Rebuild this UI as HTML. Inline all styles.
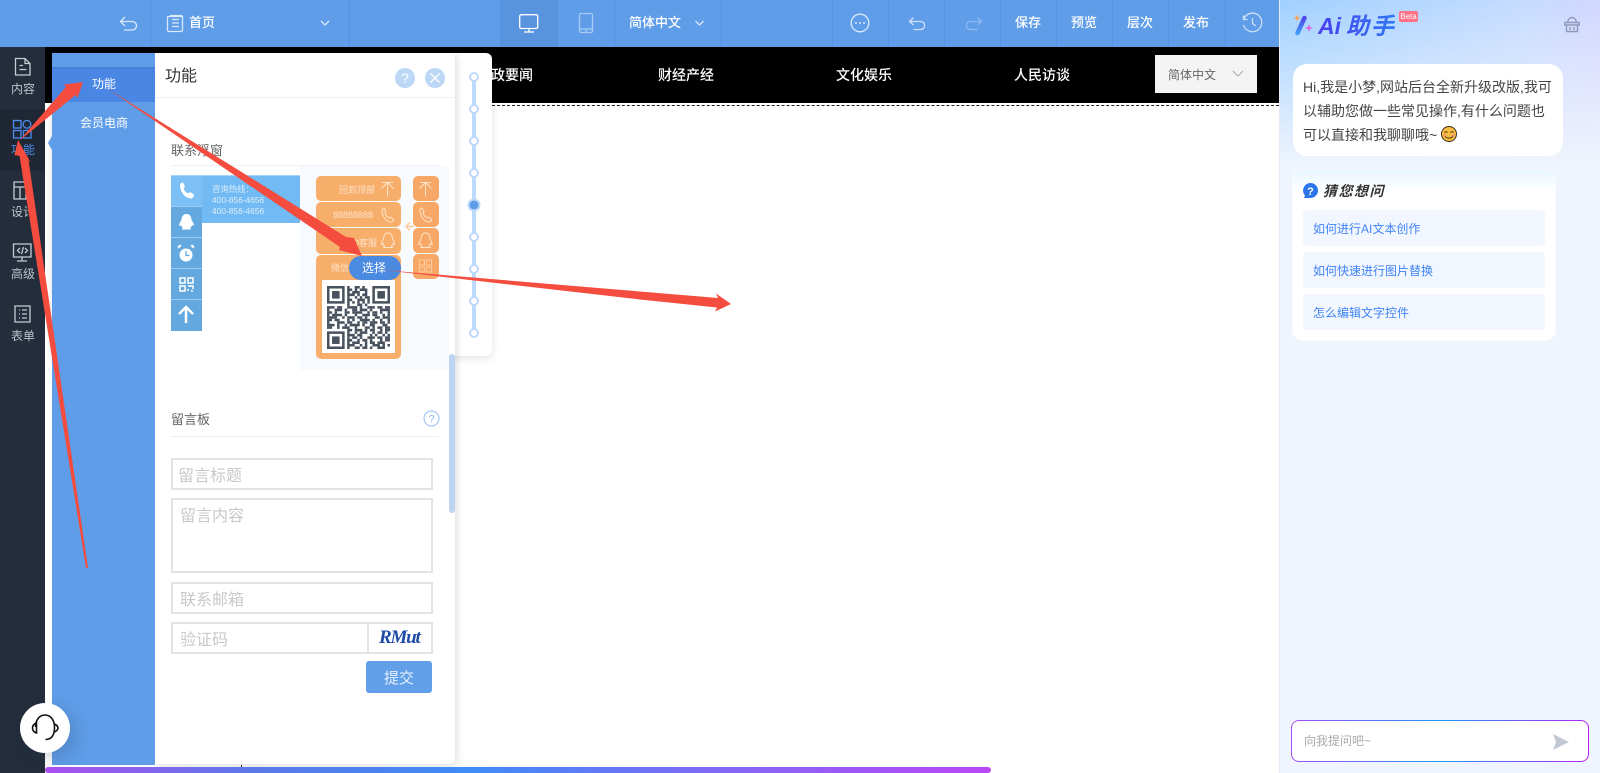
<!DOCTYPE html>
<html lang="zh-CN">
<head>
<meta charset="utf-8">
<title>编辑器</title>
<style>
html,body{margin:0;padding:0;width:1600px;height:773px;overflow:hidden;background:#fff}
body{position:relative;font-family:"Liberation Sans","Noto Sans CJK SC",sans-serif;color:#333}
.a{position:absolute}
.t{position:absolute;white-space:nowrap;line-height:20px}
.c{text-align:center;transform:translateX(-50%)}
.w{color:#fff}
.b{font-weight:500}
.div{position:absolute;top:0;width:1px;height:47px;background:#5592e3}
.inp{position:absolute;box-sizing:border-box;border:2px solid #e3e3e3;background:#fff}
.ph{position:absolute;white-space:nowrap;color:#c9c9c9;font-size:16px;line-height:20px}
.o{position:absolute;background:#f7ae6b;border-radius:5px}
.ot{position:absolute;white-space:nowrap;color:#fde3c9;font-size:9px;line-height:12px}
.bl{position:absolute;left:171px;width:31px;background:#63a9e0;border-top:1px solid #9ccaf0;box-sizing:border-box}
.q{position:absolute;left:1303px;width:242px;height:36px;background:#f2f6fe;border-radius:4px;color:#3f84f5;font-size:12px;line-height:38px;text-indent:10px}
svg{position:absolute;overflow:visible}
</style>
</head>
<body>

<!-- top bar -->
<div class="a" style="left:0;top:0;width:1279px;height:47px;background:#5f9de8"></div>
<div class="div" style="left:150px"></div>
<div class="div" style="left:349px"></div>
<div class="a" style="left:500px;top:0;width:57px;height:47px;background:#5893dd"></div>
<div class="div" style="left:500px"></div>
<div class="div" style="left:557px"></div>
<div class="div" style="left:614px"></div>
<div class="div" style="left:721px"></div>
<div class="div" style="left:832px"></div>
<div class="div" style="left:888px"></div>
<div class="div" style="left:944px"></div>
<div class="div" style="left:1000px"></div>
<div class="div" style="left:1056px"></div>
<div class="div" style="left:1112px"></div>
<div class="div" style="left:1168px"></div>
<div class="div" style="left:1225px"></div>

<svg style="left:0;top:0" width="1279" height="47" fill="none" stroke="#dbe9fb" stroke-width="1.3">
  <!-- back -->
  <path d="M125 17l-4.500 4.500 4.500 4.500M121 21.500h11c6 0 6 8.500 0 8.500h-8"/>
  <!-- page -->
  <path d="M167.500 16.500v13.500c0 .8.700 1.500 1.500 1.500h12c.8 0 1.500-.7 1.500-1.500V16M167.500 16.500h15M170 15.500h12.500"/>
  <path d="M172 19.500h7M172 23h7M172 26.500h7"/>
  <!-- chevron -->
  <path d="M321 21l4 4 4-4"/>
  <!-- desktop -->
  <rect x="519.700" y="14.700" width="18" height="13.800" rx="1.500" stroke="#fff"/>
  <path d="M529 28.500v3.500M524 32h10" stroke="#fff"/>
  <!-- mobile -->
  <rect x="579.500" y="13.500" width="13" height="19" rx="1.500" stroke="#a9cbf3"/>
  <path d="M579.500 29h13M585 31h2" stroke="#a9cbf3"/>
  <path d="M695.500 21l4 4 4-4"/>
  <!-- more -->
  <circle cx="860" cy="23" r="8.800" stroke="#dbe9fb"/>
  <circle cx="856" cy="23" r="1" fill="#dbe9fb" stroke="none"/>
  <circle cx="860" cy="23" r="1" fill="#dbe9fb" stroke="none"/>
  <circle cx="864" cy="23" r="1" fill="#dbe9fb" stroke="none"/>
  <!-- undo -->
  <path d="M913.500 17.500l-4 4 4 3.500M909.500 21.500h11c5.500 0 5.500 8 0 8h-7" stroke="#cfe1f9"/>
  <!-- redo -->
  <path d="M977.500 17.500l4 4-4 3.500M981.500 21.500h-11c-5.500 0-5.500 8 0 8h7" stroke="#8cb9ef"/>
  <!-- history -->
  <path d="M1244 18.500a9.300 9.300 0 1 1-.5 6.500M1243.500 15.500v4h4M1252.500 18v5.500l3.500 2.500" stroke="#cfe1f9"/>
</svg>

<div class="t w b" style="left:189px;top:13px;font-size:13px">首页</div>
<div class="t w b" style="left:629px;top:13px;font-size:13px">简体中文</div>
<div class="t w b" style="left:1015px;top:13px;font-size:13px">保存</div>
<div class="t w b" style="left:1071px;top:13px;font-size:13px">预览</div>
<div class="t w b" style="left:1127px;top:13px;font-size:13px">层次</div>
<div class="t w b" style="left:1183px;top:13px;font-size:13px">发布</div>

<!-- black nav -->
<div class="a" style="left:45px;top:47px;width:1234px;height:56px;background:#000"></div>
<div class="a" style="left:492px;top:104.500px;width:787px;height:0;border-top:1px dashed #222"></div>
<div class="t w b" style="left:491px;top:65px;font-size:14px">政要闻</div>
<div class="t w b" style="left:658px;top:65px;font-size:14px">财经产经</div>
<div class="t w b" style="left:836px;top:65px;font-size:14px">文化娱乐</div>
<div class="t w b" style="left:1014px;top:65px;font-size:14px">人民访谈</div>
<div class="a" style="left:1155px;top:55px;width:102px;height:38px;background:#f4f4f4"></div>
<div class="t" style="left:1168px;top:65px;font-size:12px;color:#666">简体中文</div>
<svg style="left:0;top:0" width="1279" height="100" fill="none"><path d="M1233 71l5 5 5-5" stroke="#aaa"/></svg>

<!-- sidebar -->
<div class="a" style="left:0;top:47px;width:45px;height:726px;background:#232d3b"></div>
<div class="a" style="left:0;top:109px;width:45px;height:62px;background:#1e2733"></div>
<svg style="left:0;top:47px" width="52" height="300" fill="none" stroke="#c6cbd2" stroke-width="1.300">
  <path d="M15.500 11.500h9.500l5 5v11.500h-14.500zM25 11.500v5h5M19.500 18.500h3.500M19.500 22.500h7"/>
  <g stroke="#4d8ff0"><rect x="13.500" y="73.500" width="7.500" height="7.500"/><circle cx="27" cy="77.300" r="3.900"/><rect x="13.500" y="83.500" width="7.500" height="7.500"/><rect x="23.500" y="83.500" width="7.500" height="7.500"/></g>
  <path d="M14 135h16.500v17H14zM14 140h16.500M20 140v12M26 140v12"/>
  <path d="M13.500 197h17.500v13H13.500zM22 210v4M17 214h10M20 201l-2.500 2.500 2.500 2.500M25 201l2.500 2.500-2.500 2.500M23.500 200l-2 7"/>
  <path d="M15 259h15v16H15zM19 263h1M22 263h5M19 267h1M22 267h5M19 271h1M22 271h5"/>
</svg>
<div class="t c" style="left:23px;top:79px;font-size:12px;color:#bcc2ca">内容</div>
<div class="t c" style="left:23px;top:140px;font-size:12px;color:#4d8ff0">功能</div>
<div class="t c" style="left:23px;top:202px;font-size:12px;color:#bcc2ca">设计</div>
<div class="t c" style="left:23px;top:264px;font-size:12px;color:#bcc2ca">高级</div>
<div class="t c" style="left:23px;top:326px;font-size:12px;color:#bcc2ca">表单</div>

<!-- white panel with rail -->
<div class="a" style="left:52px;top:53px;width:440px;height:303px;background:#fff;border-radius:0 6px 6px 0;box-shadow:0 2px 8px rgba(0,0,0,.12)"></div>
<div class="a" style="left:155px;top:53px;width:300px;height:711px;background:#fff;border-radius:0 0 5px 0;box-shadow:2px 2px 8px rgba(0,0,0,.13)"></div>
<div class="a" style="left:52px;top:53px;width:103px;height:712px;background:#5f9de8"></div>
<svg style="left:0;top:0" width="60" height="200"><path d="M52.500 135L48 143l4.500 8z" fill="#5f9de8"/></svg>
<div class="a" style="left:52px;top:67px;width:103px;height:35px;background:#4a86e3;border-top:2px solid #4580dc;box-sizing:border-box"></div>
<div class="t c w" style="left:104px;top:74px;font-size:12px">功能</div>
<div class="t c w" style="left:104px;top:113px;font-size:12px">会员电商</div>

<div class="t" style="left:165px;top:67px;font-size:16px;color:#333">功能</div>
<div class="a" style="left:155px;top:97px;width:300px;height:1px;background:#eef0f3"></div>
<svg style="left:0;top:0" width="500" height="360" fill="none">
  <circle cx="405" cy="78" r="10" fill="#bdd7f7"/>
  <text x="405" y="83" font-size="14" fill="#fff" text-anchor="middle" font-family="Liberation Sans">?</text>
  <circle cx="435" cy="78" r="10" fill="#bdd7f7"/>
  <path d="M430.500 73.500l9 9M439.500 73.500l-9 9" stroke="#fff" stroke-width="1.300"/>
  <!-- rail -->
  <path d="M474 77v256" stroke="#bdd9fb" stroke-width="4"/>
  <g fill="#fff" stroke="#bdd9fb" stroke-width="2">
    <circle cx="474" cy="77" r="4"/><circle cx="474" cy="109" r="4"/><circle cx="474" cy="141" r="4"/><circle cx="474" cy="173" r="4"/>
    <circle cx="474" cy="237" r="4"/><circle cx="474" cy="269" r="4"/><circle cx="474" cy="301" r="4"/><circle cx="474" cy="333" r="4"/>
  </g>
  <circle cx="474" cy="205" r="5.500" fill="#5f9de8" stroke="#bdd9fb" stroke-width="2"/>
</svg>

<div class="t" style="left:171px;top:141px;font-size:13px;color:#666">联系浮窗</div>
<div class="a" style="left:171px;top:165px;width:268px;height:1px;background:#eef0f3"></div>

<!-- preview -->
<div class="a" style="left:300px;top:166px;width:149px;height:204px;background:#f7faff"></div>
<div class="a" style="left:171px;top:175px;width:129px;height:48px;background:#72baf3;border-top:1px solid #a5d5f8;box-sizing:border-box"></div>
<div class="a" style="left:171px;top:176px;width:31px;height:31px;background:#7cc0f5"></div>
<div class="bl" style="top:206px;height:31px"></div>
<div class="bl" style="top:237px;height:31px"></div>
<div class="bl" style="top:268px;height:31px"></div>
<div class="bl" style="top:299px;height:32px"></div>
<div class="ot" style="left:212px;top:183px;color:#dbeefc;font-size:8.400px">咨询热线：</div>
<div class="ot" style="left:212px;top:194px;color:#dbeefc;font-size:8.400px">400-856-4656</div>
<div class="ot" style="left:212px;top:205px;color:#dbeefc;font-size:8.400px">400-856-4656</div>
<svg style="left:0;top:0" width="210" height="340" fill="#fff" stroke="none">
  <path d="M180 185c0-1.500 2-2.500 3-2.500l2 4-1.500 2c.8 2 2.500 4 4.500 5l2-1.500 4 2.500c0 2-1.500 4-3 4-6 0-11-7-11-13.500z"/>
  <path d="M186.500 214c3.500 0 5 3 5 6 1.500 2 3 4.500 2 6l-1.500-1c-.3 1.500-1 2.500-2 3l1.500 1.500h-10l1.500-1.500c-1-.5-1.700-1.500-2-3l-1.500 1c-1-1.500.5-4 2-6 0-3 1.500-6 5-6z"/>
  <circle cx="186" cy="255" r="6.500" fill="#fff"/>
  <path d="M178.500 248.500l3-2.500-1.500-1.500-2.500 2zM193.500 248.500l-3-2.500 1.500-1.500 2.500 2z"/>
  <path d="M186 251v4.500h3.500" fill="none" stroke="#63a9e0" stroke-width="1.300"/>
  <g fill="none" stroke="#fff" stroke-width="1.500">
    <rect x="180" y="278" width="5" height="5"/><rect x="188" y="278" width="5" height="5"/><rect x="180" y="286" width="5" height="5"/>
    <path d="M188 286h5v3M188 289v2M191 291h2"/>
  </g>
  <path d="M186 323v-16M179 314l7-7 7 7" fill="none" stroke="#fff" stroke-width="2.500"/>
</svg>

<div class="o" style="left:316px;top:176px;width:85px;height:25px"></div>
<div class="o" style="left:316px;top:202px;width:85px;height:25px"></div>
<div class="o" style="left:316px;top:228px;width:85px;height:26px"></div>
<div class="o" style="left:316px;top:255px;width:85px;height:104px"></div>
<div class="o" style="left:413px;top:176px;width:26px;height:25px;background:#f7a866"></div>
<div class="o" style="left:413px;top:202px;width:26px;height:25px;background:#f7a866"></div>
<div class="o" style="left:413px;top:228px;width:26px;height:25px;background:#f7a866"></div>
<div class="o" style="left:413px;top:254px;width:26px;height:25px;background:#f7a866"></div>
<div class="ot" style="left:339px;top:184px">回到顶部</div>
<div class="ot" style="left:333px;top:209px">88888888</div>
<div class="ot" style="left:345px;top:237px">QQ客服</div>
<div class="ot" style="left:331px;top:262px">微信</div>
<svg style="left:300px;top:170px" width="150" height="120" fill="none" stroke="#fde3c9" stroke-width="1">
  <path d="M82 12.500h11M87.500 12.500v14M81.500 18.500l6-6 6 6"/>
  <path d="M120 12.500h11M125.500 12.500v14M119.500 18.500l6-6 6 6"/>
  <path d="M82 40c0-1 1-2 2-2l2 4-1 1.500c1 2 2.500 3.500 4 4.500l1.500-1 3 2.500c0 1-1 2.500-2.500 2.500-5 0-9-6-9-12z"/>
  <path d="M120 40c0-1 1-2 2-2l2 4-1 1.500c1 2 2.500 3.500 4 4.500l1.500-1 3 2.500c0 1-1 2.500-2.500 2.500-5 0-9-6-9-12z"/>
  <path d="M88 63c3 0 4.500 3 4.500 6 1.500 2 2.500 4 2 5.500l-1.500-1c-.3 1.500-1 2-1.500 2.500l1 1.500h-9l1-1.500c-.5-.5-1.200-1-1.500-2.500l-1.500 1c-.5-1.500.5-3.500 2-5.500 0-3 1.500-6 4.500-6z"/>
  <path d="M125.500 63c3 0 4.500 3 4.500 6 1.500 2 2.500 4 2 5.500l-1.500-1c-.3 1.500-1 2-1.500 2.500l1 1.500h-9l1-1.500c-.5-.5-1.200-1-1.500-2.500l-1.500 1c-.5-1.500.5-3.500 2-5.500 0-3 1.500-6 4.500-6z"/>
  <g stroke="#fccb9c"><rect x="119.500" y="90" width="5" height="5"/><rect x="126.500" y="90" width="5" height="5"/><rect x="119.500" y="97" width="5" height="5"/><rect x="126.500" y="97" width="5" height="5"/><path d="M119.500 104h12"/></g>
  <path d="M114 56.500h-8M110 52.500l-4 4 4 4" stroke="#fbc99a" stroke-width="1.500"/>
</svg>
<div class="a" style="left:322px;top:280px;width:73px;height:73px;background:#fff"></div>
<svg style="left:327px;top:286px" width="63" height="63" viewBox="0 0 25 25" fill="none" stroke="#48525e">
  <g stroke-width="1">
    <path stroke-dasharray="1 2 2 1 1 3 1 2" d="M8 .5h9"/>
    <path stroke-dasharray="2 1 1 1 3 1" d="M8 1.500h9"/>
    <path stroke-dasharray="1 1 3 2 1 1" d="M8 2.500h9"/>
    <path stroke-dasharray="3 1 1 1 2 1" d="M8 3.500h9"/>
    <path stroke-dasharray="1 2 1 1 1 1 2 1" d="M8 4.500h9"/>
    <path stroke-dasharray="2 2 3 1 1" d="M8 5.500h9"/>
    <path stroke-dasharray="1 1 1 1 1 1 1 1 1" d="M8 6.500h9"/>
    <path stroke-dasharray="1 3 2 1 1 1" d="M8 7.500h9"/>
    <path stroke-dasharray="3 1 2 2 4 1 1 2 3 1 2 1 3" d="M0 8.500h25"/>
    <path stroke-dasharray="1 2 3 1 1 2 2 1 3 1 1 3 4" d="M0 9.500h25"/>
    <path stroke-dasharray="2 1 1 3 2 1 4 2 1 1 2 1 1 2" d="M0 10.500h25"/>
    <path stroke-dasharray="1 1 4 1 1 3 1 2 3 1 2 2 1 1" d="M0 11.500h25"/>
    <path stroke-dasharray="4 2 1 1 3 1 2 1 1 3 2 1 3" d="M0 12.500h25"/>
    <path stroke-dasharray="2 1 2 3 1 1 1 2 4 1 1 2 1 2" d="M0 13.500h25"/>
    <path stroke-dasharray="1 3 3 1 2 2 1 1 2 1 3 1 2 1" d="M0 14.500h25"/>
    <path stroke-dasharray="3 1 1 2 1 1 4 1 1 2 2 3 2" d="M0 15.500h25"/>
    <path stroke-dasharray="2 2 1 1 3 2 1 3 2 1 1 1 2 1" d="M0 16.500h25"/>
    <path stroke-dasharray="2 1 3 1 1 1 2 2 1 1 3 2 2" d="M8 17.500h17"/>
    <path stroke-dasharray="1 2 1 1 3 2 1 1 2 1 1 1" d="M8 18.500h17"/>
    <path stroke-dasharray="3 1 2 3 1 1 1 2 1 1" d="M8 19.500h17"/>
    <path stroke-dasharray="1 1 2 1 1 2 3 1 2 1 2" d="M8 20.500h17"/>
    <path stroke-dasharray="2 2 1 1 2 1 1 3 1 1 2" d="M8 21.500h17"/>
    <path stroke-dasharray="1 1 3 2 1 1 2 1 3 2" d="M8 22.500h17"/>
    <path stroke-dasharray="3 2 1 1 1 2 3 1 1 1 1" d="M8 23.500h17"/>
    <path stroke-dasharray="1 2 2 1 2 1 1 2 3 2" d="M8 24.500h17"/>
  </g>
  <g stroke-width="1">
    <rect x=".5" y=".5" width="6" height="6"/><rect x="18.500" y=".5" width="6" height="6"/><rect x=".5" y="18.500" width="6" height="6"/>
  </g>
  <g fill="#48525e" stroke="none"><rect x="2" y="2" width="3" height="3"/><rect x="20" y="2" width="3" height="3"/><rect x="2" y="20" width="3" height="3"/></g>
</svg>
<div class="a" style="left:349px;top:256px;width:52px;height:24px;border-radius:12px;background:#4a8ae0"></div>
<div class="t c w" style="left:374px;top:258px;font-size:12px">选择</div>

<!-- scrollbar -->
<div class="a" style="left:449px;top:354px;width:6px;height:159px;background:#bdd4f3;border-radius:3px"></div>

<!-- form -->
<div class="t" style="left:171px;top:410px;font-size:13px;color:#666">留言板</div>
<svg style="left:423px;top:410px" width="17" height="17" fill="none"><circle cx="8.500" cy="8.500" r="7.500" stroke="#8fbdf3"/><text x="8.500" y="12.500" font-size="11" fill="#8fbdf3" text-anchor="middle" font-family="Liberation Sans">?</text></svg>
<div class="a" style="left:171px;top:436px;width:268px;height:1px;background:#eef0f3"></div>
<div class="inp" style="left:171px;top:458px;width:262px;height:32px"></div>
<div class="ph" style="left:178px;top:467px">留言标题</div>
<div class="inp" style="left:171px;top:498px;width:262px;height:75px"></div>
<div class="ph" style="left:180px;top:507px">留言内容</div>
<div class="inp" style="left:171px;top:582px;width:262px;height:32px"></div>
<div class="ph" style="left:180px;top:591px">联系邮箱</div>
<div class="inp" style="left:171px;top:622px;width:262px;height:32px"></div>
<div class="a" style="left:367px;top:622px;width:2px;height:32px;background:#e3e3e3"></div>
<div class="ph" style="left:180px;top:631px">验证码</div>
<div class="t" style="left:379px;top:628px;font-family:'Liberation Serif',serif;font-weight:bold;font-style:italic;font-size:19px;letter-spacing:-1.200px;color:#1f4ba5">RMut</div>
<div class="a" style="left:366px;top:661px;width:66px;height:32px;background:#619fe8;border-radius:3px"></div>
<div class="t c" style="left:399px;top:669px;font-size:15px;color:#e6f0fc">提交</div>

<!-- service circle -->
<div class="a" style="left:20px;top:703px;width:50px;height:50px;border-radius:50%;background:#fff;box-shadow:6px 6px 16px rgba(40,60,90,.22)"></div>
<svg style="left:20px;top:703px" width="50" height="50" fill="none" stroke="#111" stroke-width="1.600">
  <path d="M15.500 24c0-7 4-12 9.500-12s9.500 5 9.500 12c0 6-2 10-4.500 11.500-1.500.7-3 1-4.500 1"/>
  <path d="M16.500 20c-3 1-4 3-4 5s1 4 4 5zM34.500 21c2 1 3.500 2.500 3.500 4s-1.500 3-3.500 4"/>
</svg>

<!-- bottom bar -->
<div class="a" style="left:45px;top:767px;width:946px;height:6px;border-radius:3px;background:linear-gradient(90deg,#ab4ff0 0%,#5b79e8 22%,#3f8cf5 45%,#7f6af5 70%,#bb48f5 100%)"></div>
<div class="a" style="left:241px;top:765px;width:1px;height:2px;background:#333"></div>

<!-- AI panel -->
<div class="a" style="left:1279px;top:0;width:321px;height:773px;background:linear-gradient(180deg,rgba(240,245,253,0) 0,#f0f5fd 170px,#f0f5fd 100%),linear-gradient(100deg,#9fd0ff 0%,#c6dcff 55%,#e6ccff 100%);border-left:1px solid #e6ecf6;box-sizing:border-box"></div>

<svg style="left:1290px;top:10px" width="30" height="30" fill="none">
  <defs><linearGradient id="wg" x1="0" y1="1" x2="0" y2="0"><stop offset="0" stop-color="#3f9cf8"/><stop offset="1" stop-color="#4f46e8"/></linearGradient></defs>
  <path d="M7.500 23L14.500 8" stroke="url(#wg)" stroke-width="4.500" stroke-linecap="round"/>
  <path d="M7 4.500l1 2.500 2.500 1-2.500 1-1 2.500-1-2.500-2.500-1 2.500-1z" fill="#f7a35c"/>
  <path d="M19 14l1 3 3 1-3 1-1 3-1-3-3-1 3-1z" fill="#e55cd8"/>
</svg>
<div class="t" style="left:1318px;top:13px;font-size:23px;line-height:26px;font-weight:bold;font-style:italic;background:linear-gradient(90deg,#4a3df0,#2f78f5);-webkit-background-clip:text;background-clip:text;color:transparent;font-family:'Liberation Sans','Noto Sans CJK SC',sans-serif"><span style="margin-right:5px">Ai</span><span style="letter-spacing:2px">助手</span></div>
<div class="a" style="left:1399px;top:11px;width:19px;height:11px;border-radius:2px;background:#ff6f86;color:#fff;font-size:8px;line-height:11px;text-align:center">Beta</div>
<svg style="left:1564px;top:16px" width="20" height="18" fill="none" stroke="#8e9ab6" stroke-width="1.400">
  <path d="M3.500 6.500C4 3 6 1.500 8 1.500s4 1.500 4.500 5M.8 6.500h14.400v2.500H.8zM2.500 9v6.500h11V9M6 11v3M10 11v3"/>
</svg>

<div class="a" style="left:1293px;top:64px;width:270px;height:92px;background:#fff;border-radius:14px"></div>
<div class="t" style="left:1303px;top:77px;font-size:14px;color:#444">Hi,我是小梦,网站后台全新升级改版,我可</div>
<div class="t" style="left:1303px;top:101px;font-size:14px;color:#444">以辅助您做一些常见操作,有什么问题也</div>
<div class="t" style="left:1303px;top:125px;font-size:14px;color:#444">可以直接和我聊聊哦~</div>
<svg style="left:1441px;top:126px" width="17" height="17">
  <circle cx="8" cy="8" r="7.500" fill="#f9bd3f" stroke="#3a3020"/>
  <path d="M3.500 6.500c1-1 2-1 3 0M9.500 6.500c1-1 2-1 3 0" stroke="#3a3020" fill="none"/>
  <path d="M4 9.500c1 3.500 7 3.500 8 0" stroke="#3a3020" fill="none"/>
  <circle cx="3.500" cy="9.500" r="1.300" fill="#f48a7a"/><circle cx="12.500" cy="9.500" r="1.300" fill="#f48a7a"/>
</svg>

<div class="a" style="left:1292px;top:169px;width:264px;height:172px;border-radius:11px;background:linear-gradient(180deg,#e8f7ff 0,#fff 22px);box-sizing:border-box;border:1px solid #f7fbff"></div>
<svg style="left:1303px;top:183px" width="15" height="15"><path d="M7.500 0a7.500 7.500 0 1 1 0 15H1l1-2.500A7.500 7.500 0 0 1 7.500 0z" fill="#2b74ea"/><text x="7.500" y="12" font-size="11" font-weight="bold" fill="#fff" text-anchor="middle" font-family="Liberation Sans">?</text></svg>
<div class="t" style="left:1323px;top:181px;font-size:14px;font-weight:bold;font-style:italic;letter-spacing:1.500px;color:#333">猜您想问</div>
<div class="q" style="top:210px">如何进行AI文本创作</div>
<div class="q" style="top:252px">如何快速进行图片替换</div>
<div class="q" style="top:294px">怎么编辑文字控件</div>

<div class="a" style="left:1291px;top:720px;width:298px;height:42px;box-sizing:border-box;border:1px solid transparent;border-radius:8px;background:linear-gradient(#fff,#fff) padding-box,linear-gradient(90deg,#a44cf5,#1e9bf5 50%,#b91ff5) border-box"></div>
<div class="t" style="left:1304px;top:731px;font-size:12px;color:#aaa">向我提问吧~</div>
<svg style="left:1553px;top:733px" width="17" height="18"><path d="M0 1l16 8-16 8 3-8z" fill="#c2c8d6"/></svg>

<!-- red annotation arrows -->
<svg style="left:0;top:0;z-index:20" width="1600" height="773" fill="#f44c3e">
  <path d="M19 141L66 87 64 84.500 83 82 77.500 98 75.500 95z"/>
  <path d="M88 568L28.500 160 31 163 18 140 14.500 155 19.500 156 86 568z"/>
  <path d="M108 89L346 237 354 238 362 256 339 250 340 247z"/>
  <path d="M383 270L640 299.500 717 307.500 715 311.500 731 304 716 293.500 718 298 640 291.500z"/>
</svg>

</body>
</html>
